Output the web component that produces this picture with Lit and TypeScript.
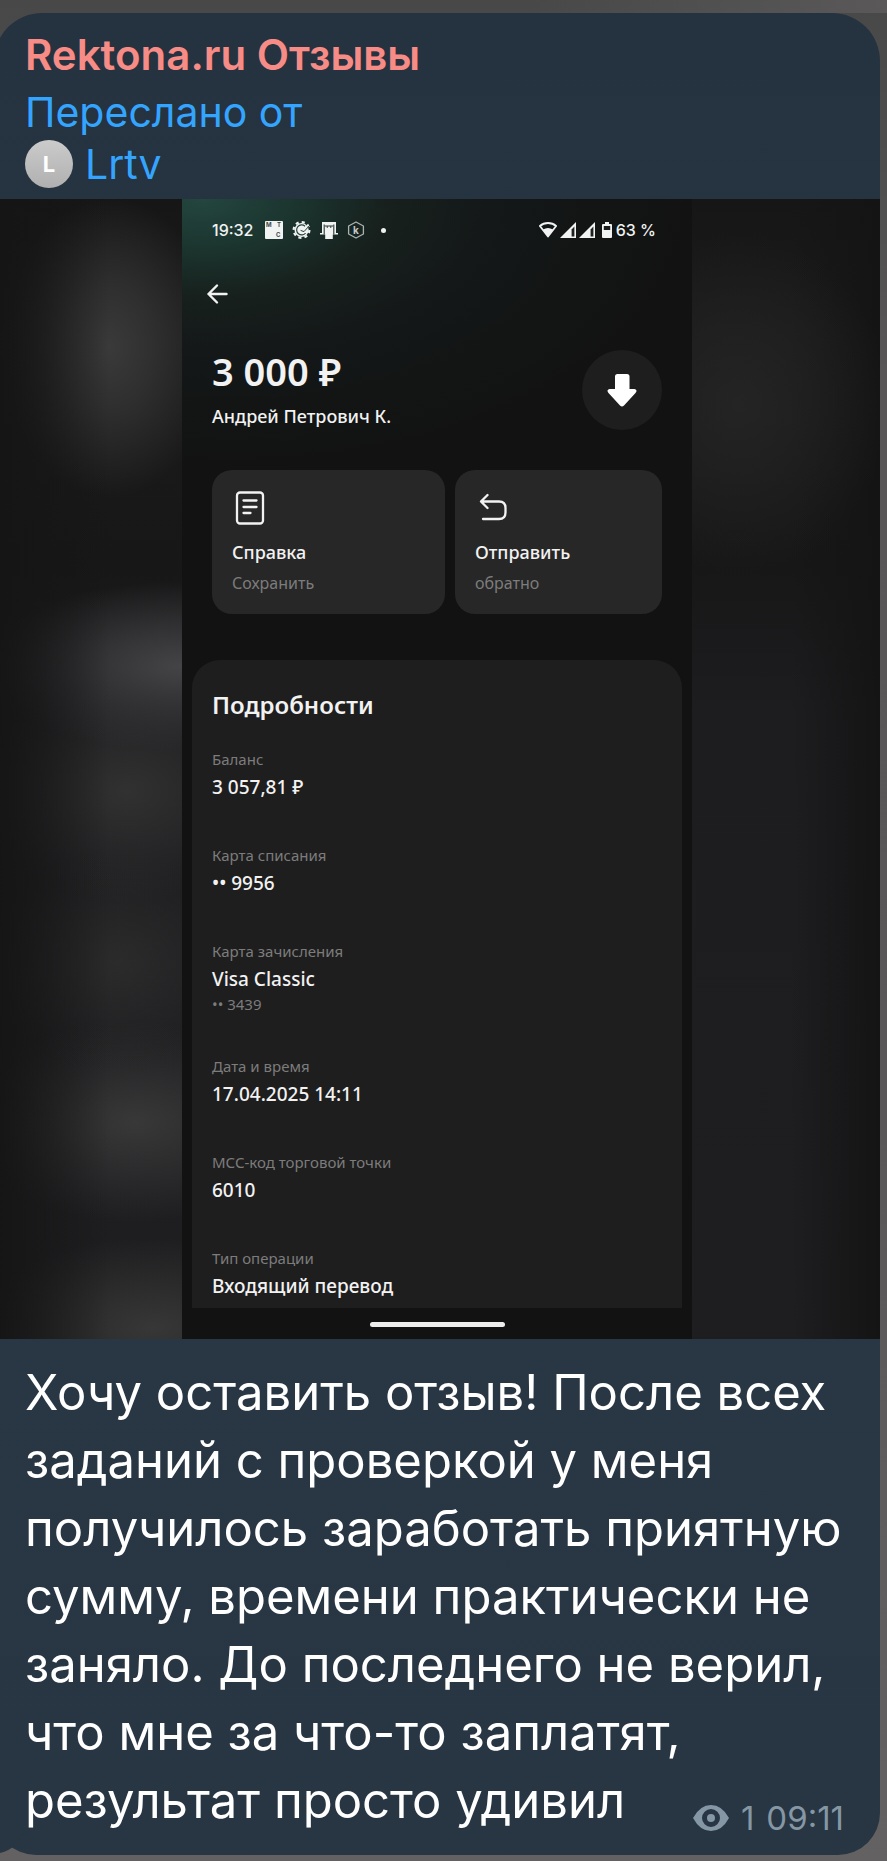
import { LitElement, html, css, svg } from "lit";
import { customElement } from "lit/decorators.js";

interface Detail {
  label: string;
  value: string;
  note?: string;
}

const details: Detail[] = [
  { label: "Баланс", value: "3 057,81 ₽" },
  { label: "Карта списания", value: "•• 9956" },
  { label: "Карта зачисления", value: "Visa Classic", note: "•• 3439" },
  { label: "Дата и время", value: "17.04.2025 14:11" },
  { label: "МСС-код торговой точки", value: "6010" },
  { label: "Тип операции", value: "Входящий перевод" },
];

const signal = svg`
  <path d="M0 16 16 0V16Z" fill="#f0f3f2"/>
  <path d="M11.6 7.4 14.4 4.6V14.4H11.6Z" fill="#1b1f1e"/>`;

@customElement("status-bar")
class StatusBar extends LitElement {
  static styles = css`
    :host {
      display: flex;
      justify-content: space-between;
      align-items: center;
      height: 30px;
      font: 500 16px/30px Inter, sans-serif;
      color: #eef2f1;
    }
    .group { display: flex; align-items: center; }
    .apps { gap: 9px; }
    .time { margin-right: 3px; }
    .dot { width: 5px; height: 5px; border-radius: 50%; background: #eef2f1; margin-left: 7px; }
    .signals { gap: 3px; padding-right: 6px; }
    .battery { margin: 0 1px 0 4px; }
    svg { display: block; }
    .mark { font: 700 6px Inter, sans-serif; }
    .hex { font: 700 10px Inter, sans-serif; }
  `;

  render() {
    return html`
      <div class="group apps">
        <span class="time">19:32</span>
        <svg width="18" height="18" viewBox="0 0 18 18">
          <rect width="18" height="18" rx="1" fill="#f0f3f2"/>
          <g class="mark" fill="#3b4644"><text x="1" y="6">M</text><text x="12" y="6">T</text><text x="11" y="16">C</text></g>
        </svg>
        <svg width="19" height="18" viewBox="0 0 19 18">
          <circle cx="9.5" cy="9" r="7.9" fill="none" stroke="#f0f3f2" stroke-width="2.2" stroke-dasharray="3.1 3.1"/>
          <circle cx="9.5" cy="9" r="7" fill="#f0f3f2"/>
          <path d="M13 5.2A5 5 0 1 0 13.6 12" fill="none" stroke="#24403a" stroke-width="1.2"/>
          <path d="M9.5 8.5 16.5 7.4A4 4 0 0 1 10 11Z" fill="#f0f3f2"/>
          <path d="M8.6 9.4 12 10.6 18 4" fill="none" stroke="#24403a" stroke-width="1"/>
        </svg>
        <svg width="18" height="18" viewBox="0 0 18 18">
          <path d="M2 1H16V12H18V13.6H12.8V18H5.2V13.6H0V12H2Z" fill="#f0f3f2"/>
          <path d="M4.2 3.4V13.4M13.8 3.4V13.4M5 5H13" stroke="#2a3835" stroke-width="1.1" fill="none"/>
          <path d="M7.3 5.2v1.6M10.7 5.2v1.6" stroke="#2a3835" stroke-width="1.2"/>
        </svg>
        <svg width="18" height="18" viewBox="0 0 18 18">
          <path d="M9 1 16.4 5V13L9 17 1.6 13V5Z" fill="none" stroke="#aab3b0" stroke-width="1.3" stroke-linejoin="round"/>
          <text class="hex" x="9" y="12.6" text-anchor="middle" fill="#c3cac8">k</text>
        </svg>
        <span class="dot"></span>
      </div>
      <div class="group signals">
        <svg width="18" height="16" viewBox="0 0 18 16">
          <path d="M9 1C5.800 1 3 2.100.9 4L9 14.500 17.100 4C15 2.100 12.200 1 9 1Z" fill="none" stroke="#f0f3f2" stroke-width="1.800" stroke-linejoin="round"/>
          <path d="M4 7.600Q9 4.400 14 7.600L9 14.500Z" fill="#f0f3f2"/>
        </svg>
        <svg width="16" height="16" viewBox="0 0 16 16">${signal}</svg>
        <svg width="16" height="16" viewBox="0 0 16 16">${signal}</svg>
        <svg class="battery" width="10" height="16" viewBox="0 0 10 16">
          <path d="M3 0H7V2H9Q10 2 10 3V15Q10 16 9 16H1Q0 16 0 15V3Q0 2 1 2H3Z" fill="#f0f3f2"/>
          <rect x="1.8" y="4" width="6.400" height="4" fill="#1b1d1d"/>
        </svg>
        <span>63 %</span>
      </div>`;
  }
}

@customElement("bank-receipt")
class BankReceipt extends LitElement {
  static styles = css`
    :host {
      display: block;
      box-sizing: border-box;
      padding-top: 16px;
      background:
        radial-gradient(ellipse 56% 150px at 4% 0, #23463e 0, #1c3630 30%, #18241f99 65%, transparent 100%),
        radial-gradient(ellipse 90% 270px at 10% 0, #171e1e 0, #141818 55%, transparent 100%),
        #121212;
      color: #f2f2f2;
      font-family: "Noto Sans", sans-serif;
    }
    button { font: inherit; color: inherit; border: 0; text-align: left; cursor: pointer; }
    svg { display: block; }
    .inset { padding: 0 30px; }
    .back { display: block; margin: 37px 0 0 24px; padding: 0; background: none; }
    .summary { display: flex; justify-content: space-between; align-items: center; margin-top: 43px; }
    .amount { margin: 0 0 9px; font-size: 38px; line-height: 44px; font-weight: 600; }
    .name { margin: 0; font-size: 18px; line-height: 28px; font-weight: 500; }
    .badge { display: grid; place-items: center; width: 80px; height: 80px; border-radius: 50%; background: #1e1e1e; }
    .actions { display: grid; grid-template-columns: 9fr 8fr; gap: 10px; margin-top: 40px; }
    .action { display: block; padding: 20px 20px 19px; border-radius: 20px; background: #272727; }
    .action-title { display: block; margin: 12px 0 5px; font-size: 18px; line-height: 28px; font-weight: 500; }
    .action-note { display: block; font-size: 16px; line-height: 24px; color: #7c7c7c; }
    .sheet { margin: 46px 10px 0; padding: 27px 20px 6px; border-radius: 28px 28px 0 0; background: #1e1e1e; }
    .sheet-title { margin: 0 0 24px; font-size: 24px; line-height: 36px; font-weight: 600; }
    .list { display: grid; gap: 40px; margin: 0; }
    .label { font-size: 15px; line-height: 24px; color: #7c7c7c; }
    .value { margin: 0; font-size: 19px; line-height: 32px; font-weight: 500; }
    .note { margin: 0; font-size: 15px; line-height: 19px; color: #7c7c7c; }
    .home { width: 135px; height: 5px; margin: 0 auto; border-radius: 3px; background: #ededed; }
    .nav { padding: 14px 0 12px; }
  `;

  render() {
    return html`
      <status-bar class="inset"></status-bar>
      <button class="back" aria-label="Назад">
        <svg width="24" height="24" viewBox="0 0 24 24" fill="none" stroke="#f2f2f2" stroke-width="2.400" stroke-linecap="round" stroke-linejoin="round">
          <path d="M20.500 12H2.500M11 3.500 2.500 12 11 20.500"/>
        </svg>
      </button>
      <div class="summary inset">
        <div>
          <h2 class="amount">3 000 ₽</h2>
          <p class="name">Андрей Петрович К.</p>
        </div>
        <div class="badge">
          <svg width="30" height="34" viewBox="0 0 30 34">
            <path d="M8 3.500Q8 1 10.500 1H20Q22.500 1 22.500 3.500V16H27.500Q31 17 28.500 20L17 32.500Q15 34.500 13 32.500L1.500 20Q-1 17 2.500 16H8Z" fill="#fff"/>
          </svg>
        </div>
      </div>
      <div class="actions inset">
        <button class="action">
          <svg width="36" height="36" viewBox="0 0 36 36" fill="none" stroke="#f2f2f2" stroke-width="2.300" stroke-linecap="round">
            <rect x="5" y="2.500" width="26" height="31" rx="3"/>
            <path d="M11.500 10.500H24.500M11.500 17H24.500M11.500 23H18.500"/>
          </svg>
          <span class="action-title">Справка</span>
          <span class="action-note">Сохранить</span>
        </button>
        <button class="action">
          <svg width="36" height="36" viewBox="0 0 36 36" fill="none" stroke="#f2f2f2" stroke-width="2.300" stroke-linecap="round" stroke-linejoin="round">
            <path d="M12.500 5 6 11.500 12.500 18M6 11.500H24Q30.500 11.500 30.500 18V22.500Q30.500 29 24 29H8"/>
          </svg>
          <span class="action-title">Отправить</span>
          <span class="action-note">обратно</span>
        </button>
      </div>
      <section class="sheet">
        <h3 class="sheet-title">Подробности</h3>
        <dl class="list">
          ${details.map(
            (d) => html`<div>
              <dt class="label">${d.label}</dt>
              <dd class="value">${d.value}</dd>
              ${d.note ? html`<dd class="note">${d.note}</dd>` : null}
            </div>`
          )}
        </dl>
      </section>
      <div class="nav"><div class="home"></div></div>`;
  }
}

@customElement("app-root")
class AppRoot extends LitElement {
  static styles = css`
    :host {
      display: block;
      box-sizing: border-box;
      min-height: 100vh;
      padding: 13px 7px 6px 0;
      overflow: hidden;
      background:
        linear-gradient(90deg, transparent 60%, #5a5858 100%) top / 100% 13px no-repeat,
        linear-gradient(#484848 0, #585657 20%, #5a5758 60%, #636161 100%);
      font-family: Inter, sans-serif;
      color: #fff;
    }
    .bubble {
      position: relative;
      margin-left: -6px;
      border-radius: 48px 48px 42px 42px;
      background: linear-gradient(#253240, #263341 12%, #293644 72%, #283543);
    }
    .tail { position: absolute; left: 6px; bottom: 0; display: block; }
    .head { padding: 14px 31px 9px; font-size: 41px; line-height: 52px; color: #34a5ff; }
    .channel { margin: 0 0 3px; font-size: 42px; line-height: 56px; font-weight: 600; color: #f78c86; }
    .forward { margin: 0; }
    .author { display: flex; align-items: center; gap: 12px; color: inherit; text-decoration: none; }
    .avatar {
      display: grid;
      place-items: center;
      width: 48px;
      height: 48px;
      border-radius: 50%;
      background: linear-gradient(#cbcbcb, #b0b0b0);
      color: #fff;
      font-size: 22px;
      line-height: 24px;
      font-weight: 700;
    }
    .photo {
      display: flex;
      justify-content: center;
      margin: 0;
      background:
        linear-gradient(90deg, #151516 0, #15151600 13%),
        radial-gradient(ellipse 110px 150px at 13% 13%, #3a3a3b 0, #2f2f30 40%, transparent 100%),
        radial-gradient(ellipse 200px 85px at 21% 41%, #444446 0, #363638 35%, transparent 100%),
        radial-gradient(ellipse 150px 110px at 15% 52%, #313132 0, transparent 100%),
        radial-gradient(ellipse 130px 110px at 14% 67%, #2b2b2c 0, transparent 100%),
        radial-gradient(ellipse 180px 100px at 16% 81%, #383839 0, transparent 100%),
        radial-gradient(ellipse 180px 90px at 18% 99%, #373737 0, transparent 100%),
        radial-gradient(ellipse 150px 170px at 84% 18%, #242425 0, transparent 100%),
        linear-gradient(90deg, transparent 90%, #141415 100%),
        linear-gradient(#161617 0, #1b1b1c 12%, #171718 32%, #1d1d1f 45%, #1e1e20 100%);
    }
    .receipt { flex: 0 1 510px; }
    .text { margin: 0; padding: 20px 31px; font-size: 49px; line-height: 68px; }
    .meta {
      display: flex;
      align-items: center;
      float: right;
      margin: 34px 5px 0 0;
      font-size: 33px;
      line-height: 34px;
      color: #8597a5;
    }
    .eye { margin-right: 12px; }
    .views { margin-right: 12px; }
  `;

  render() {
    return html`
      <article class="bubble">
        <header class="head">
          <h1 class="channel">Rektona.ru Отзывы</h1>
          <p class="forward">Переслано от</p>
          <a class="author" href="#"><span class="avatar">L</span>Lrtv</a>
        </header>
        <figure class="photo"><bank-receipt class="receipt"></bank-receipt></figure>
        <p class="text">
          Хочу оставить отзыв! После всех заданий с проверкой у меня получилось заработать приятную
          сумму, времени практически не заняло. До последнего не верил, что мне за что-то заплатят,
          результат просто удивил
          <span class="meta">
            <svg class="eye" width="36" height="26" viewBox="0 0 36 26">
              <path fill="#8597a5" fill-rule="evenodd" d="M0 13Q7 0 18 0T36 13Q29 26 18 26T0 13ZM18 4A9 9 0 1 0 18 22A9 9 0 1 0 18 4Z"/>
              <circle cx="18" cy="13" r="4" fill="#8597a5"/>
            </svg>
            <span class="views">1</span><time>09:11</time>
          </span>
        </p>
        <svg class="tail" width="24" height="42" viewBox="0 0 24 42">
          <path d="M0 0V40Q9 38 15 32L24 20V0Z" fill="#283543"/>
        </svg>
      </article>`;
  }
}
